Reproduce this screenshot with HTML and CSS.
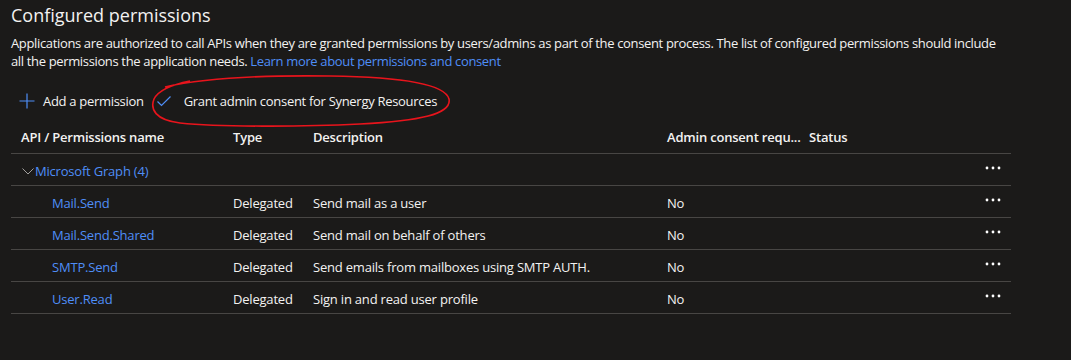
FILE: index.html
```html
<!DOCTYPE html>
<html lang="en">
<head>
    <meta charset="UTF-8">
    <title>Configured permissions</title>
    <link rel="stylesheet" href="styles.css">
</head>
<body>
    <div class="page">
        <!-- Section heading -->
        <h2 class="title">Configured permissions</h2>
        <p class="intro">
            Applications are authorized to call APIs when they are granted permissions by users/admins as part of the consent process. The list of configured permissions should include<br>
            all the permissions the application needs. <a href="#">Learn more about permissions and consent</a>
        </p>

        <!-- Command bar -->
        <div class="toolbar">
            <button class="cmd">
                <svg width="16" height="16" viewBox="0 0 16 16"><path d="M8 0.5V15.5M0.5 8H15.5" stroke="#4f8ef7" stroke-width="1.2" fill="none"/></svg>
                <span>Add a permission</span>
            </button>
            <button class="cmd">
                <svg width="16" height="16" viewBox="0 0 16 16"><path d="M1.5 8.5L5.5 12.5L14.5 3.5" stroke="#4f8ef7" stroke-width="1.2" fill="none"/></svg>
                <span>Grant admin consent for Synergy Resources</span>
            </button>
            <!-- hand-drawn annotation -->
            <svg class="scribble" width="315" height="58" viewBox="0 0 315 58">
                <path d="M24 14 C59 6 119 2 189 3 C259 4 304 11 308 26 C311 41 279 48 219 51 C159 54 79 54 39 50 C14 47 9 36 13 26 C17 18 29 12 49 8" stroke="#e8141c" stroke-width="1.6" fill="none"/>
            </svg>
        </div>

        <!-- Permissions table -->
        <div class="grid">
            <div class="row head">
                <div class="cell">API / Permissions name</div>
                <div class="cell">Type</div>
                <div class="cell">Description</div>
                <div class="cell">Admin consent requ...</div>
                <div class="cell">Status</div>
                <div class="cell"></div>
            </div>

            <div class="row group">
                <div class="cell name-group">
                    <svg width="12" height="12" viewBox="0 0 12 12"><path d="M0.5 3.5L6 9L11.5 3.5" stroke="#a19f9d" stroke-width="1" fill="none"/></svg>
                    <a href="#">Microsoft Graph (4)</a>
                </div>
                <div class="cell"></div>
                <div class="cell"></div>
                <div class="cell"></div>
                <div class="cell"></div>
                <div class="cell more"><svg width="16" height="4" viewBox="0 0 16 4"><circle cx="2" cy="2" r="1.4" fill="#fff"/><circle cx="8" cy="2" r="1.4" fill="#fff"/><circle cx="14" cy="2" r="1.4" fill="#fff"/></svg></div>
            </div>

            <div class="row">
                <div class="cell perm"><a href="#">Mail.Send</a></div>
                <div class="cell">Delegated</div>
                <div class="cell">Send mail as a user</div>
                <div class="cell">No</div>
                <div class="cell"></div>
                <div class="cell more"><svg width="16" height="4" viewBox="0 0 16 4"><circle cx="2" cy="2" r="1.4" fill="#fff"/><circle cx="8" cy="2" r="1.4" fill="#fff"/><circle cx="14" cy="2" r="1.4" fill="#fff"/></svg></div>
            </div>

            <div class="row">
                <div class="cell perm"><a href="#">Mail.Send.Shared</a></div>
                <div class="cell">Delegated</div>
                <div class="cell">Send mail on behalf of others</div>
                <div class="cell">No</div>
                <div class="cell"></div>
                <div class="cell more"><svg width="16" height="4" viewBox="0 0 16 4"><circle cx="2" cy="2" r="1.4" fill="#fff"/><circle cx="8" cy="2" r="1.4" fill="#fff"/><circle cx="14" cy="2" r="1.4" fill="#fff"/></svg></div>
            </div>

            <div class="row">
                <div class="cell perm"><a href="#">SMTP.Send</a></div>
                <div class="cell">Delegated</div>
                <div class="cell">Send emails from mailboxes using SMTP AUTH.</div>
                <div class="cell">No</div>
                <div class="cell"></div>
                <div class="cell more"><svg width="16" height="4" viewBox="0 0 16 4"><circle cx="2" cy="2" r="1.4" fill="#fff"/><circle cx="8" cy="2" r="1.4" fill="#fff"/><circle cx="14" cy="2" r="1.4" fill="#fff"/></svg></div>
            </div>

            <div class="row">
                <div class="cell perm"><a href="#">User.Read</a></div>
                <div class="cell">Delegated</div>
                <div class="cell">Sign in and read user profile</div>
                <div class="cell">No</div>
                <div class="cell"></div>
                <div class="cell more"><svg width="16" height="4" viewBox="0 0 16 4"><circle cx="2" cy="2" r="1.4" fill="#fff"/><circle cx="8" cy="2" r="1.4" fill="#fff"/><circle cx="14" cy="2" r="1.4" fill="#fff"/></svg></div>
            </div>
        </div>

        <p class="footnote">To view and manage consented permissions for individual apps, as well as your tenant's consent settings, try <a href="#">Enterprise applications</a>.</p>
    </div>
</body>
</html>
```

FILE: styles.css
```css
/* Global */
body {
    margin: 0;
    background: #1b1a19;
    color: #f3f2f1;
    font-family: 'Open Sans', 'Noto Sans', sans-serif;
    font-size: 13px;
    overflow: hidden;
}

a {
    color: #4f8ef7;
    text-decoration: none;
}

svg {
    flex-shrink: 0;
}

.page {
    padding: 3px 11px 0 11px;
    width: 1000px;
}

/* Heading and intro */
.title {
    margin: 0;
    font-size: 18px;
    font-weight: 400;
    line-height: 24px;
}

.intro {
    margin: 7px 0 0 0;
    line-height: 18px;
    letter-spacing: -0.35px;
    white-space: nowrap;
}

/* Command bar */
.toolbar {
    position: relative;
    display: flex;
    align-items: center;
    height: 36px;
    margin-top: 13px;
    padding-left: 8px;
    gap: 12px;
}

.cmd {
    display: flex;
    align-items: center;
    gap: 8px;
    background: none;
    border: none;
    padding: 0;
    color: #f3f2f1;
    font: inherit;
    font-size: 13px;
    letter-spacing: -0.3px;
}

.cmd + .cmd {
    gap: 12px;
}

.scribble {
    position: absolute;
    left: 130px;
    top: -10px;
}

/* Table */
.grid {
    width: 1000px;
}

.row {
    display: grid;
    grid-template-columns: 212px 80px 354px 142px 1fr 50px;
    height: 31px;
    align-items: center;
    border-bottom: 1px solid #484644;
}

.row.head {
    height: 34px;
    font-weight: 600;
    letter-spacing: -0.3px;
}

.cell {
    padding: 2px 0 0 10px;
    white-space: nowrap;
    letter-spacing: -0.2px;
}

.name-group {
    display: flex;
    align-items: center;
    gap: 1px;
    padding-left: 11px;
}

.perm {
    padding-left: 41px;
}

.more {
    display: flex;
    justify-content: flex-end;
    padding: 0 10px 0 0;
    margin-top: -3px;
}

.footnote {
    margin: 44px 0 0 0;
    line-height: 17px;
}
```
